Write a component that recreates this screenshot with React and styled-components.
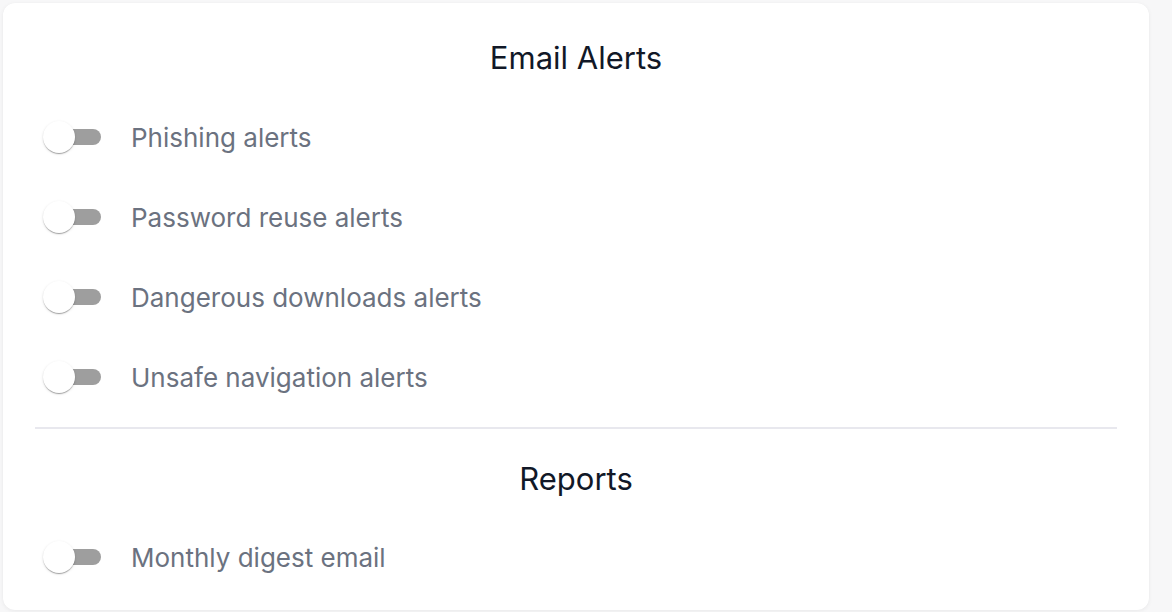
import { useState } from "react";
import styled, { createGlobalStyle } from "styled-components";

const GlobalStyle = createGlobalStyle`
    body {
        margin: 0;
        background: #f7f7f8;
        font-family: Inter, "Noto Sans", sans-serif;
    }
`;

const Page = styled.div`
    padding: 3px 23px 2px 3px;
`;

const Card = styled.div`
    background: #fff;
    border-radius: 12px;
    box-shadow: 0 1px 4px rgba(0, 0, 0, 0.06), 0 0 1px rgba(0, 0, 0, 0.04);
    padding: 37px 32px 13px;
    height: 607px;
    box-sizing: border-box;
`;

const SectionTitle = styled.h2`
    margin: 0 0 ${(p) => p.$gap}px;
    text-align: center;
    font-size: 31px;
    font-weight: 400;
    line-height: 36px;
    color: #111827;
`;

const Row = styled.label`
    display: flex;
    align-items: center;
    height: 80px;
    padding-left: 8px;
    cursor: pointer;
`;

const Track = styled.span`
    position: relative;
    flex: none;
    width: 56px;
    height: 16px;
    margin-left: 2px;
    border-radius: 8px;
    background: ${(p) => (p.$on ? "#90caf9" : "#9e9e9e")};
    transition: background 0.15s;
`;

const Thumb = styled.span`
    position: absolute;
    top: -8px;
    left: ${(p) => (p.$on ? "26px" : "-2px")};
    width: 32px;
    height: 32px;
    border-radius: 50%;
    background: ${(p) => (p.$on ? "#1976d2" : "#fff")};
    box-shadow: 0 2px 1px -1px rgba(0, 0, 0, 0.2), 0 1px 1px 0 rgba(0, 0, 0, 0.14),
        0 1px 3px 0 rgba(0, 0, 0, 0.12);
    transition: left 0.15s;
`;

const HiddenInput = styled.input`
    display: none;
`;

const Label = styled.span`
    margin-left: 30px;
    font-size: 26px;
    color: #6b7280;
`;

const Divider = styled.hr`
    margin: 10px 0 32px;
    border: none;
    height: 2px;
    background: #e8e8ee;
`;

const emailAlerts = [
    "Phishing alerts",
    "Password reuse alerts",
    "Dangerous downloads alerts",
    "Unsafe navigation alerts",
];

const ToggleRow = ({ label }) => {
    const [on, setOn] = useState(false);
    return (
        <Row>
            <HiddenInput type="checkbox" checked={on} onChange={() => setOn(!on)} />
            <Track $on={on}>
                <Thumb $on={on} />
            </Track>
            <Label>{label}</Label>
        </Row>
    );
};

const App = () => {
    return (
        <>
            <GlobalStyle />
            <Page>
                <Card>
                    <SectionTitle $gap={21}>Email Alerts</SectionTitle>
                    {emailAlerts.map((item) => (
                        <ToggleRow key={item} label={item} />
                    ))}
                    <Divider />
                    <SectionTitle $gap={20}>Reports</SectionTitle>
                    <ToggleRow label="Monthly digest email" />
                </Card>
            </Page>
        </>
    );
};

export default App;
